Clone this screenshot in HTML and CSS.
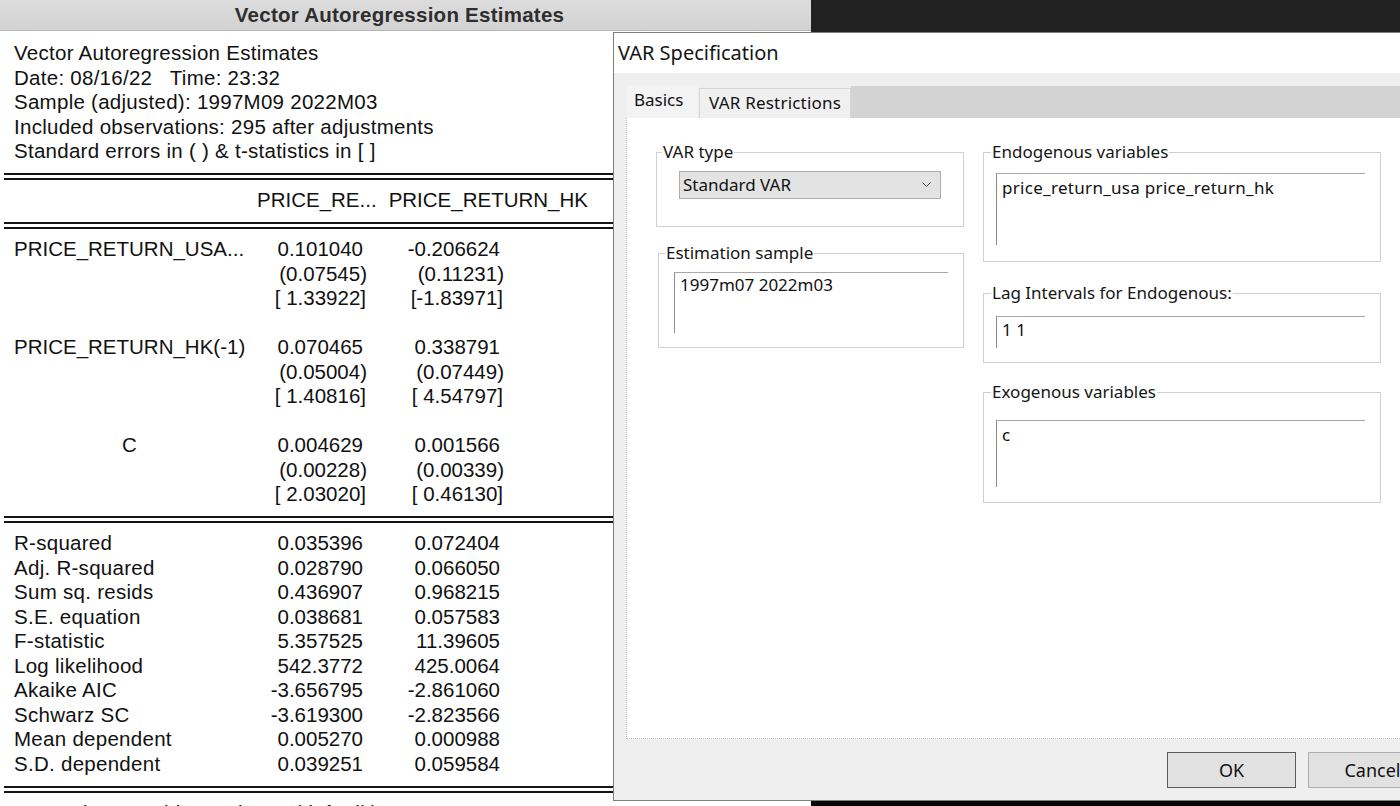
FILE: index.html
```html
<!DOCTYPE html>
<html>
<head>
<meta charset="utf-8">
<title>VAR</title>
<link rel="stylesheet" href="styles.css">
</head>
<body>
<div class="desktop">
  <section class="win">
    <header class="win-title">Vector Autoregression Estimates</header>
    <div class="win-body">
      <div class="intro">
        <div>Vector Autoregression Estimates</div>
        <div class="pre">Date: 08/16/22   Time: 23:32</div>
        <div>Sample (adjusted): 1997M09 2022M03</div>
        <div>Included observations: 295 after adjustments</div>
        <div>Standard errors in ( ) &amp; t-statistics in [ ]</div>
      </div>
      <div class="rule"></div>
      <div class="hdr"><span>PRICE_RE...</span><span>PRICE_RETURN_HK</span></div>
      <div class="rule"></div>
      <div class="tbl">
        <div class="lbl">PRICE_RETURN_USA...</div><div class="v">0.101040</div><div class="v">-0.206624</div>
        <div></div><div class="v se">(0.07545)</div><div class="v se">(0.11231)</div>
        <div></div><div class="v ts">[ 1.33922]</div><div class="v ts">[-1.83971]</div>
        <div class="blank"></div>
        <div class="lbl">PRICE_RETURN_HK(-1)</div><div class="v">0.070465</div><div class="v">0.338791</div>
        <div></div><div class="v se">(0.05004)</div><div class="v se">(0.07449)</div>
        <div></div><div class="v ts">[ 1.40816]</div><div class="v ts">[ 4.54797]</div>
        <div class="blank"></div>
        <div class="lbl center">C</div><div class="v">0.004629</div><div class="v">0.001566</div>
        <div></div><div class="v se">(0.00228)</div><div class="v se">(0.00339)</div>
        <div></div><div class="v ts">[ 2.03020]</div><div class="v ts">[ 0.46130]</div>
      </div>
      <div class="rule"></div>
      <div class="tbl stats">
        <div class="lbl sp">R-squared</div><div class="v">0.035396</div><div class="v">0.072404</div>
        <div class="lbl sp">Adj. R-squared</div><div class="v">0.028790</div><div class="v">0.066050</div>
        <div class="lbl sp">Sum sq. resids</div><div class="v">0.436907</div><div class="v">0.968215</div>
        <div class="lbl sp">S.E. equation</div><div class="v">0.038681</div><div class="v">0.057583</div>
        <div class="lbl sp">F-statistic</div><div class="v">5.357525</div><div class="v">11.39605</div>
        <div class="lbl sp">Log likelihood</div><div class="v">542.3772</div><div class="v">425.0064</div>
        <div class="lbl sp">Akaike AIC</div><div class="v">-3.656795</div><div class="v">-2.861060</div>
        <div class="lbl sp">Schwarz SC</div><div class="v">-3.619300</div><div class="v">-2.823566</div>
        <div class="lbl sp">Mean dependent</div><div class="v">0.005270</div><div class="v">0.000988</div>
        <div class="lbl sp">S.D. dependent</div><div class="v">0.039251</div><div class="v">0.059584</div>
      </div>
      <div class="rule"></div>
      <div class="tbl">
        <div class="lbl sp wide">Determinant resid covariance (dof adj.)</div><div class="v">3.09E-09</div>
      </div>
    </div>
  </section>
  <div class="backdrop">
    <div class="backdrop-top"></div>
  </div>

  <section class="dlg">
    <header class="dlg-title">VAR Specification</header>
    <div class="tabs">
      <div class="tab active">Basics</div>
      <div class="tab">VAR Restrictions</div>
      <div class="tab-fill"></div>
    </div>
    <div class="panel">
      <div class="col">
        <fieldset class="grp g-type">
          <legend>VAR type</legend>
          <div class="combo">
            <span>Standard VAR</span>
            <svg width="9" height="6" viewBox="0 0 9 6"><polyline points="0.5,0.5 4.5,4.5 8.5,0.5" fill="none" stroke="#444" stroke-width="1"/></svg>
          </div>
        </fieldset>
        <fieldset class="grp g-sample">
          <legend>Estimation sample</legend>
          <div class="field f-sample">1997m07 2022m03</div>
        </fieldset>
      </div>
      <div class="col">
        <fieldset class="grp g-endo">
          <legend>Endogenous variables</legend>
          <div class="field f-endo">price_return_usa price_return_hk</div>
        </fieldset>
        <fieldset class="grp g-lag">
          <legend>Lag Intervals for Endogenous:</legend>
          <div class="field f-lag">1 1</div>
        </fieldset>
        <fieldset class="grp g-exo">
          <legend>Exogenous variables</legend>
          <div class="field f-exo">c</div>
        </fieldset>
      </div>
    </div>
    <div class="buttons">
      <button class="btn default">OK</button>
      <button class="btn">Cancel</button>
    </div>
  </section>
</div>
</body>
</html>
```

FILE: styles.css
```css
* { box-sizing: border-box; }
html, body { margin: 0; padding: 0; }
body {
  width: 1400px;
  height: 806px;
  overflow: hidden;
  background: #070707;
}
.desktop {
  position: relative;
  display: flex;
  width: 1400px;
  height: 806px;
}

/* ---------- left output window ---------- */
.win {
  width: 811px;
  flex: 0 0 811px;
  height: 806px;
  background: #fff;
  font-family: "Liberation Sans", Arial, sans-serif;
  font-size: 20.5px;
  color: #111;
  overflow: hidden;
}
.win-title {
  height: 31px;
  background: linear-gradient(#dcdcdc, #d2d2d2);
  border-bottom: 1px solid #b4b4b4;
  font-weight: bold;
  color: #2e2e2e;
  text-align: center;
  line-height: 30px;
  padding-right: 12px;
  letter-spacing: 0.25px;
}
.win-body {
  line-height: 24.5px;
}
.intro {
  padding: 10px 0 9.5px 14px;
  letter-spacing: 0.27px;
}
.pre { white-space: pre; }
.rule {
  margin-left: 4px;
  height: 7px;
  border-top: 2px solid #151515;
  border-bottom: 2px solid #151515;
}
.hdr {
  display: flex;
  gap: 12px;
  padding: 8px 0 9.5px 257px;
  white-space: pre;
}
.tbl {
  display: grid;
  grid-template-columns: 231px 118px 137px;
  padding: 8px 0 9.5px 14px;
}
.tbl.stats { padding-bottom: 10px; }
.lbl { white-space: nowrap; }
.lbl.sp { letter-spacing: 0.28px; }
.lbl.center { text-align: center; }
.lbl.wide { grid-column: 1 / span 2; }
.v { text-align: right; white-space: pre; }
.v.se { margin-right: -4px; }
.v.ts { margin-right: -3px; }
.blank { grid-column: 1 / -1; height: 24.5px; }

/* ---------- desktop backdrop ---------- */
.backdrop {
  flex: 1;
  background: #060606;
}
.backdrop-top {
  height: 32px;
  background: #212121;
}

/* ---------- dialog ---------- */
.dlg {
  position: absolute;
  left: 613px;
  top: 32px;
  width: 840px;
  height: 769px;
  border: 1px solid #7d7d7d;
  background: #efefef;
  display: flex;
  flex-direction: column;
  font-family: "Noto Sans", "Open Sans", sans-serif;
  font-size: 17px;
  color: #111;
}
.dlg-title {
  height: 40px;
  background: #fff;
  padding-left: 4px;
  font-size: 20px;
  line-height: 40px;
  color: #151515;
}
.tabs {
  display: flex;
  height: 33px;
  margin-top: 12px;
  padding-left: 13px;
}
.tab {
  height: 30px;
  margin-top: 3px;
  padding-left: 9px;
  width: 152px;
  background: #f0f0f0;
  border: 1px solid #d6d6d6;
  border-bottom: none;
  line-height: 28px;
  letter-spacing: 0.2px;
}
.tab.active {
  width: 71px;
  height: 32px;
  margin-top: 1px;
  margin-right: 1px;
  padding-left: 7px;
  border: none;
  background: #f3f3f3;
  line-height: 28px;
  letter-spacing: 0;
}
.tab-fill {
  flex: 1;
  margin-top: 1px;
  background: #d3d3d3;
}
.panel {
  margin-left: 12px;
  height: 621px;
  background: #fff;
  border-left: 1px dotted #c4c4c4;
  border-bottom: 1px dotted #c4c4c4;
  padding: 24px 0 0 29px;
  display: grid;
  grid-template-columns: 308px 398px;
  column-gap: 19px;
  align-content: start;
}
.col {
  display: flex;
  flex-direction: column;
}
.grp {
  margin: 0;
  border: 1px solid #d0d0d0;
  padding: 0;
}
.grp legend {
  padding: 0 1px;
  line-height: 20px;
  color: #151515;
}
.g-type { height: 85px; padding-top: 9px; }
.g-type legend { margin-left: 5px; }
.g-type .combo { margin-left: 22px; }
.g-sample { height: 105px; margin: 16px 0 0 2px; width: 306px; padding-top: 9px; }
.g-sample legend { margin-left: 6px; }
.g-sample .field { margin-left: 15px; }
.g-endo { height: 120px; padding-top: 11px; }
.g-lag { height: 80px; margin-top: 21px; padding-top: 13px; }
.g-exo { height: 121px; margin-top: 19px; padding-top: 18px; }
.g-endo legend, .g-lag legend, .g-exo legend { margin-left: 7px; }
.g-endo .field, .g-lag .field, .g-exo .field { margin-left: 12px; }

.combo {
  width: 262px;
  height: 28px;
  background: #e3e3e3;
  border: 1px solid #adadad;
  display: flex;
  align-items: center;
  justify-content: space-between;
  padding: 0 9px 0 3px;
  line-height: 20px;
}
.combo svg { display: block; }

.field {
  border-top: 1px solid #a8a8a8;
  border-left: 1px solid #8c8c8c;
  padding: 4px 5px 0 5px;
  line-height: 20px;
  white-space: pre;
}
.f-sample { width: 274px; height: 61px; padding-top: 2px; }
.f-endo { width: 369px; height: 72px; letter-spacing: 0.3px; }
.f-lag { width: 369px; height: 32px; padding-top: 3px; }
.f-exo { width: 369px; height: 67px; }

.buttons {
  display: flex;
  gap: 12px;
  margin-top: 13px;
  padding-left: 553px;
}
.btn {
  width: 129px;
  height: 36px;
  background: #e1e1e1;
  border: 1px solid #adadad;
  font-family: "Noto Sans", "Open Sans", sans-serif;
  font-size: 18px;
  color: #111;
  padding: 0;
}
.btn.default { border-color: #5c5c5c; }
```
